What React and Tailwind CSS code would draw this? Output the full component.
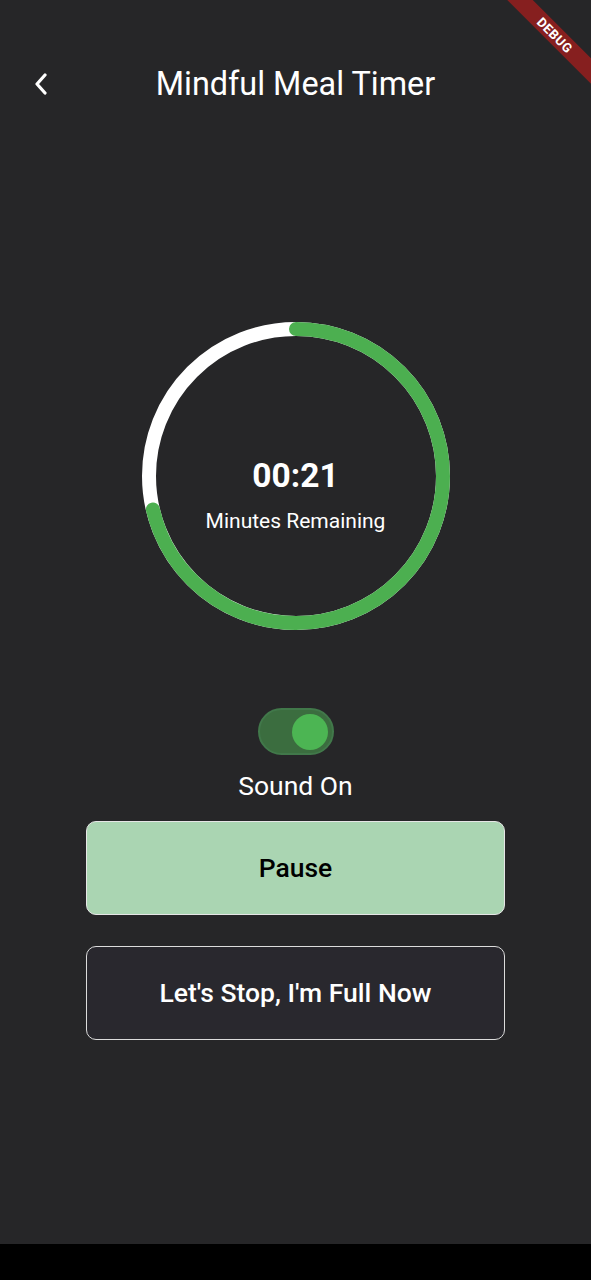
import React, { useState } from "react";

const RADIUS = 147;
const CIRC = 2 * Math.PI * RADIUS;
const PROGRESS = 256.7 / 360;

const TimerRing = () => {
  return (
    <div className="relative w-[310px] h-[310px] flex flex-col items-center">
      <svg
        className="absolute inset-0"
        width="310"
        height="310"
        viewBox="0 0 310 310"
      >
        <circle
          cx="155"
          cy="155"
          r={RADIUS}
          fill="none"
          stroke="#ffffff"
          strokeWidth="14"
        />
        <circle
          cx="155"
          cy="155"
          r={RADIUS}
          fill="none"
          stroke="#4caf50"
          strokeWidth="14"
          strokeLinecap="round"
          strokeDasharray={`${CIRC * PROGRESS} ${CIRC}`}
          transform="rotate(-90 155 155)"
        />
      </svg>
      <span className="relative mt-[136px] text-[33.5px] leading-[38px] font-bold text-white">
        00:21
      </span>
      <span className="relative mt-[14px] text-[21px] leading-[24px] text-white">
        Minutes Remaining
      </span>
    </div>
  );
};

const App = () => {
  const [soundOn, setSoundOn] = useState(true);

  return (
    <div
      className="w-full h-[1280px] flex flex-col bg-black"
      style={{ fontFamily: "Roboto, 'Noto Sans', sans-serif" }}
    >
      <div className="relative h-[1244px] bg-[#262628] flex flex-col items-center overflow-hidden">
        {/* debug banner */}
        <div className="absolute top-0 right-0 w-[120px] h-[120px] overflow-hidden pointer-events-none">
          <div className="absolute left-[-1px] top-[26px] w-[170px] h-[18px] rotate-45 bg-[#861f1f] flex items-center justify-center">
            <span className="text-[13px] leading-none font-bold tracking-[0.5px] text-white">
              DEBUG
            </span>
          </div>
        </div>

        <header className="mt-[56px] h-[56px] w-full flex items-center">
          <button className="w-[82px] h-[56px] flex items-center justify-center text-white">
            <svg
              width="14"
              height="22"
              viewBox="0 0 14 22"
              fill="none"
              stroke="white"
              strokeWidth="3.2"
              strokeLinecap="round"
              strokeLinejoin="round"
            >
              <path d="M11 2 L3 11 L11 20" />
            </svg>
          </button>
          <h1 className="flex-1 text-center text-[32.4px] leading-[40px] text-white">
            Mindful Meal Timer
          </h1>
          <div className="w-[82px]" />
        </header>

        <div className="mt-[209px]">
          <TimerRing />
        </div>

        <button
          onClick={() => setSoundOn(!soundOn)}
          className={`mt-[77px] w-[76px] h-[47px] rounded-full border-2 flex items-center px-[4px] ${
            soundOn
              ? "bg-[#3b6d3f] border-[#41784a] justify-end"
              : "bg-[#3a3a3e] border-[#8a8a8a] justify-start"
          }`}
        >
          <span
            className={`block w-[36px] h-[36px] rounded-full ${
              soundOn ? "bg-[#4cb553]" : "bg-[#9a9a9a]"
            }`}
          />
        </button>
        <span className="mt-[16px] text-[26.5px] leading-[30px] text-white">
          {soundOn ? "Sound On" : "Sound Off"}
        </span>

        <button className="mt-[20px] w-[419px] h-[94px] rounded-[10px] border-[1.5px] border-[#e6e6e6] bg-[#aad5b2] text-[26.5px] font-medium text-black">
          Pause
        </button>
        <button className="mt-[31px] w-[419px] h-[94px] rounded-[10px] border-[1.5px] border-[#dcdcdc] bg-[#29282e] text-[26.5px] font-medium text-white">
          Let's Stop, I'm Full Now
        </button>
      </div>
    </div>
  );
};

export default App;
